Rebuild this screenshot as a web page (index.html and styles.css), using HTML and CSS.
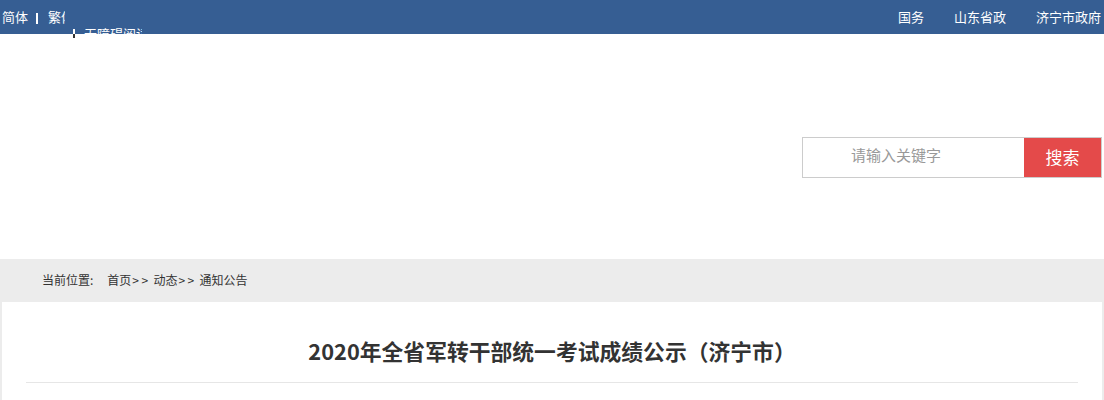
FILE: index.html
```html
<!DOCTYPE html>
<html lang="zh-CN">
<head>
<meta charset="utf-8">
<title>2020年全省军转干部统一考试成绩公示（济宁市）</title>
<link rel="stylesheet" href="styles.css">
</head>
<body>
<div class="topbar">
  <div class="lang">
    <div class="lang-line1"><span class="lk">简体</span><span class="sep"></span><span class="lk">繁体</span></div>
    <div class="lang-line2"><span class="sep2"></span><span class="lk">无障碍阅读</span></div>
  </div>
  <div class="links">
    <span class="lk">国务</span>
    <span class="lk">山东省政</span>
    <span class="lk">济宁市政府</span>
  </div>
</div>
<div class="header">
  <div class="search">
    <div class="input">请输入关键字</div>
    <div class="btn">搜索</div>
  </div>
</div>
<div class="crumb"><span class="label">当前位置:</span>首页<span class="arr">&gt;&gt;</span> 动态<span class="arr">&gt;&gt;</span> 通知公告</div>
<div class="main">
  <div class="content">
    <h1 class="title">2020年全省军转干部统一考试成绩公示（济宁市）</h1>
    <div class="divider"></div>
  </div>
</div>
</body>
</html>
```
FILE: styles.css
```css
html, body {
  margin: 0;
  padding: 0;
  background: #fff;
  font-family: "Noto Sans CJK SC", "Liberation Sans", sans-serif;
  color: #333;
  overflow: hidden;
}
.topbar {
  height: 34px;
  background: #365e93;
  display: flex;
  justify-content: space-between;
  align-items: flex-start;
  color: #fff;
  font-size: 13px;
}
.lang {
  height: 34px;
  padding-left: 2px;
}
.lang-line1 {
  width: 63px;
  height: 22px;
  padding-top: 6px;
  line-height: 22px;
  white-space: nowrap;
  overflow: hidden;
  display: flex;
  align-items: center;
}
.sep {
  display: inline-block;
  width: 2px;
  height: 11px;
  background: #fff;
  margin: 3px 10px 0 8px;
  flex: none;
}
.lang-line2 {
  margin-left: 71px;
  width: 69px;
  height: 18px;
  line-height: 18px;
  margin-top: -3px;
  white-space: nowrap;
  overflow: hidden;
  display: flex;
  align-items: flex-start;
}
.sep2 {
  display: inline-block;
  width: 2px;
  height: 9px;
  margin-top: 4px;
  margin-right: 9px;
  background: linear-gradient(#fff 0, #fff 5px, #333 5px, #333 100%);
  flex: none;
}
.links {
  display: flex;
  gap: 30px;
  padding-right: 3px;
  padding-top: 6px;
  line-height: 22px;
}
.header {
  height: 225px;
  display: flex;
  justify-content: flex-end;
  align-items: flex-start;
  padding-right: 2px;
  box-sizing: border-box;
  padding-top: 103px;
}
.search {
  display: flex;
  border: 1px solid #ccc;
  height: 39px;
  width: 298px;
}
.input {
  width: 221px;
  box-sizing: border-box;
  padding-left: 48px;
  font-size: 15px;
  color: #999;
  line-height: 33px;
}
.btn {
  flex: 1;
  background: #e44a4a;
  color: #fff;
  font-size: 17px;
  text-align: center;
  line-height: 38px;
}
.crumb {
  height: 43px;
  background: #ececec;
  padding-left: 42px;
  font-size: 12px;
  line-height: 42px;
  color: #333;
  white-space: nowrap;
}
.label {
  margin-right: 14px;
}
.arr {
  letter-spacing: 2.5px;
  margin-left: 1px;
}
.main {
  background: #ececec;
  padding: 0 2px;
}
.content {
  background: #fff;
  padding-top: 34px;
  height: 120px;
}
.title {
  margin: 0;
  font-size: 21.8px;
  line-height: 30px;
  font-weight: bold;
  text-align: center;
  color: #333;
}
.divider {
  margin: 16px 24px 0 24px;
  height: 1px;
  background: #e6e6e6;
}
```
